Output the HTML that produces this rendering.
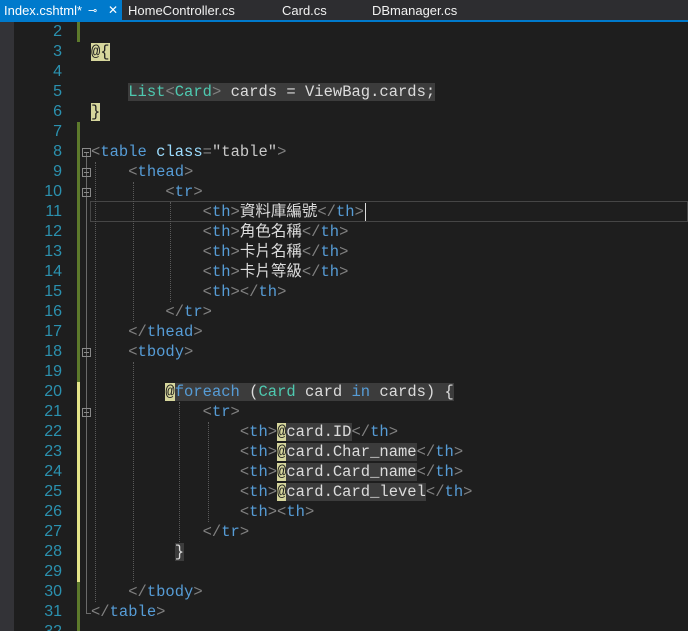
<!DOCTYPE html>
<html><head><meta charset="utf-8"><style>
*{margin:0;padding:0;box-sizing:border-box}
html,body{width:688px;height:631px;overflow:hidden}
body{background:#1e1e1e;position:relative;font-family:"Liberation Mono","Noto Sans CJK TC",monospace;font-size:15.5px}
.tabs{position:absolute;left:0;top:0;width:688px;height:20px;background:#2d2d30;font-family:"Liberation Sans",sans-serif;font-size:13px;color:#f1f1f1}
.tabs span{position:absolute;top:3px}
.act{position:absolute;left:0;top:0;width:122px;height:20px;background:#007acc;color:#fff}
.bar{position:absolute;left:0;top:20px;width:688px;height:2px;background:#007acc}
.strip{position:absolute;left:0;top:22px;width:14px;height:609px;background:#333337}
.ln{position:absolute;left:14px;width:48px;text-align:right;color:#2b91af;height:20px;line-height:20px;font-family:"Liberation Sans",sans-serif;font-size:16px}
.cb{position:absolute;left:77px;width:3px;height:20px}
.g{background:#5d7a2c}.y{background:#e5e58a}
.c{position:absolute;left:91px;height:20px;line-height:20px;white-space:pre;color:#dcdcdc}
.b{color:#808080}.k{color:#569cd6}.t{color:#4ec9b0}.a{color:#9cdcfe}.s{color:#c8c8c8}
.at{background:#d6d69c;color:#1e1e1e}
.hl{background:#3c3c3c}
.gd{position:absolute;width:0;border-left:1px dotted #5a5a5a}
.fm{position:absolute;left:82px;width:9px;height:9px;border:1px solid #8a8a8a;font-size:0}
.fm:after{content:"";position:absolute;left:1px;top:3px;width:5px;height:1px;background:#8a8a8a}
</style></head><body>
<div class="tabs">
<div class="act"><span style="left:4px">Index.cshtml*</span><span style="left:88px;font-size:11px;top:4px">⊸</span><span style="left:108px;font-size:12px">✕</span></div>
<span style="left:128px">HomeController.cs</span>
<span style="left:282px">Card.cs</span>
<span style="left:372px">DBmanager.cs</span>
</div>
<div class="bar"></div>
<div class="strip"></div>

<div class="ln" style="top:22px">2</div><div class="ln" style="top:42px">3</div><div class="ln" style="top:62px">4</div><div class="ln" style="top:82px">5</div><div class="ln" style="top:102px">6</div><div class="ln" style="top:122px">7</div><div class="ln" style="top:142px">8</div><div class="ln" style="top:162px">9</div><div class="ln" style="top:182px">10</div><div class="ln" style="top:202px">11</div><div class="ln" style="top:222px">12</div><div class="ln" style="top:242px">13</div><div class="ln" style="top:262px">14</div><div class="ln" style="top:282px">15</div><div class="ln" style="top:302px">16</div><div class="ln" style="top:322px">17</div><div class="ln" style="top:342px">18</div><div class="ln" style="top:362px">19</div><div class="ln" style="top:382px">20</div><div class="ln" style="top:402px">21</div><div class="ln" style="top:422px">22</div><div class="ln" style="top:442px">23</div><div class="ln" style="top:462px">24</div><div class="ln" style="top:482px">25</div><div class="ln" style="top:502px">26</div><div class="ln" style="top:522px">27</div><div class="ln" style="top:542px">28</div><div class="ln" style="top:562px">29</div><div class="ln" style="top:582px">30</div><div class="ln" style="top:602px">31</div><div class="ln" style="top:622px">32</div>

<div class="cb g" style="top:22px"></div>
<div class="cb g" style="top:122px;height:260px"></div>
<div class="cb y" style="top:382px;height:200px"></div>
<div class="cb g" style="top:582px;height:49px"></div>

<div style="position:absolute;left:86px;top:152px;height:462px;border-left:1px solid #6a6a6a"></div>
<div style="position:absolute;left:86px;top:613px;width:5px;border-top:1px solid #6a6a6a"></div>
<div class="fm" style="top:148px"></div><div class="fm" style="top:168px"></div><div class="fm" style="top:188px"></div><div class="fm" style="top:348px"></div><div class="fm" style="top:408px"></div>

<div style="position:absolute;left:90px;top:201px;width:598px;height:21px;border:1px solid #464646"></div>

<div class="gd" style="left:95px;top:162px;height:440px"></div>
<div class="gd" style="left:133px;top:182px;height:140px"></div>
<div class="gd" style="left:133px;top:362px;height:220px"></div>
<div class="gd" style="left:170px;top:202px;height:100px"></div>
<div class="gd" style="left:179px;top:402px;height:140px"></div>
<div class="gd" style="left:208px;top:422px;height:100px"></div>

<div class="c" style="top:42px"><span class="at">@{</span></div>
<div class="c" style="top:82px">    <span class="hl"><span class="t">List</span><span class="b">&lt;</span><span class="t">Card</span><span class="b">&gt;</span> cards = ViewBag.cards;</span></div>
<div class="c" style="top:102px"><span class="at">}</span></div>
<div class="c" style="top:142px"><span class="b">&lt;</span><span class="k">table</span> <span class="a">class</span><span class="b">=</span><span class="s">"table"</span><span class="b">&gt;</span></div>
<div class="c" style="top:162px">    <span class="b">&lt;</span><span class="k">thead</span><span class="b">&gt;</span></div>
<div class="c" style="top:182px">        <span class="b">&lt;</span><span class="k">tr</span><span class="b">&gt;</span></div>
<div class="c" style="top:202px">            <span class="b">&lt;</span><span class="k">th</span><span class="b">&gt;</span>資料庫編號<span class="b">&lt;/</span><span class="k">th</span><span class="b">&gt;</span><span style="border-left:1px solid #ddd;margin-left:1px"></span></div>
<div class="c" style="top:222px">            <span class="b">&lt;</span><span class="k">th</span><span class="b">&gt;</span>角色名稱<span class="b">&lt;/</span><span class="k">th</span><span class="b">&gt;</span></div>
<div class="c" style="top:242px">            <span class="b">&lt;</span><span class="k">th</span><span class="b">&gt;</span>卡片名稱<span class="b">&lt;/</span><span class="k">th</span><span class="b">&gt;</span></div>
<div class="c" style="top:262px">            <span class="b">&lt;</span><span class="k">th</span><span class="b">&gt;</span>卡片等級<span class="b">&lt;/</span><span class="k">th</span><span class="b">&gt;</span></div>
<div class="c" style="top:282px">            <span class="b">&lt;</span><span class="k">th</span><span class="b">&gt;&lt;/</span><span class="k">th</span><span class="b">&gt;</span></div>
<div class="c" style="top:302px">        <span class="b">&lt;/</span><span class="k">tr</span><span class="b">&gt;</span></div>
<div class="c" style="top:322px">    <span class="b">&lt;/</span><span class="k">thead</span><span class="b">&gt;</span></div>
<div class="c" style="top:342px">    <span class="b">&lt;</span><span class="k">tbody</span><span class="b">&gt;</span></div>
<div class="c" style="top:382px">        <span class="at">@</span><span class="hl"><span class="k">foreach</span> (<span class="t">Card</span> card <span class="k">in</span> cards) {</span></div>
<div class="c" style="top:402px">            <span class="b">&lt;</span><span class="k">tr</span><span class="b">&gt;</span></div>
<div class="c" style="top:422px">                <span class="b">&lt;</span><span class="k">th</span><span class="b">&gt;</span><span class="at">@</span><span class="hl">card.ID</span><span class="b">&lt;/</span><span class="k">th</span><span class="b">&gt;</span></div>
<div class="c" style="top:442px">                <span class="b">&lt;</span><span class="k">th</span><span class="b">&gt;</span><span class="at">@</span><span class="hl">card.Char_name</span><span class="b">&lt;/</span><span class="k">th</span><span class="b">&gt;</span></div>
<div class="c" style="top:462px">                <span class="b">&lt;</span><span class="k">th</span><span class="b">&gt;</span><span class="at">@</span><span class="hl">card.Card_name</span><span class="b">&lt;/</span><span class="k">th</span><span class="b">&gt;</span></div>
<div class="c" style="top:482px">                <span class="b">&lt;</span><span class="k">th</span><span class="b">&gt;</span><span class="at">@</span><span class="hl">card.Card_level</span><span class="b">&lt;/</span><span class="k">th</span><span class="b">&gt;</span></div>
<div class="c" style="top:502px">                <span class="b">&lt;</span><span class="k">th</span><span class="b">&gt;&lt;</span><span class="k">th</span><span class="b">&gt;</span></div>
<div class="c" style="top:522px">            <span class="b">&lt;/</span><span class="k">tr</span><span class="b">&gt;</span></div>
<div class="c" style="top:542px">         <span class="hl">}</span></div>
<div class="c" style="top:582px">    <span class="b">&lt;/</span><span class="k">tbody</span><span class="b">&gt;</span></div>
<div class="c" style="top:602px"><span class="b">&lt;/</span><span class="k">table</span><span class="b">&gt;</span></div>
</body></html>
